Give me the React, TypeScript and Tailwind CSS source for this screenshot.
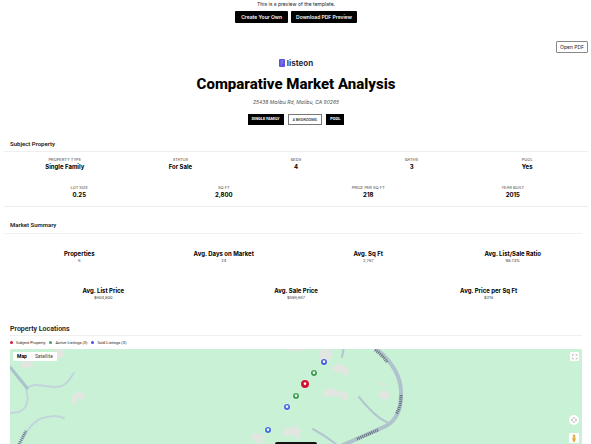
type Item = { label: string; value: string };

const subjectTop: Item[] = [
  { label: "Property Type", value: "Single Family" },
  { label: "Status", value: "For Sale" },
  { label: "Beds", value: "4" },
  { label: "Baths", value: "3" },
  { label: "Pool", value: "Yes" },
];
const subjectBottom: Item[] = [
  { label: "Lot Size", value: "0.25" },
  { label: "Sq Ft", value: "2,800" },
  { label: "Price per Sq Ft", value: "218" },
  { label: "Year Built", value: "2015" },
];
const marketTop: Item[] = [
  { label: "Properties", value: "6" },
  { label: "Avg. Days on Market", value: "24" },
  { label: "Avg. Sq Ft", value: "2,767" },
  { label: "Avg. List/Sale Ratio", value: "98.73%" },
];
const marketBottom: Item[] = [
  { label: "Avg. List Price", value: "$604,800" },
  { label: "Avg. Sale Price", value: "$596,667" },
  { label: "Avg. Price per Sq Ft", value: "$216" },
];
const legend = [
  { label: "Subject Property", dot: "bg-[#d6163a]" },
  { label: "Active Listings (3)", dot: "bg-[#4f9c62]" },
  { label: "Sold Listings (3)", dot: "bg-[#4b50e6]" },
];
const pins = [
  { x: 314, y: 13, r: 3, color: "#4a5bdc" },
  { x: 304, y: 24, r: 3, color: "#35a04c" },
  { x: 295, y: 35, r: 4, color: "#d2122e" },
  { x: 286, y: 47, r: 3, color: "#35a04c" },
  { x: 277, y: 58, r: 3, color: "#3f6be0" },
  { x: 258, y: 81, r: 3, color: "#3f6be0" },
];

function Facts({ items, className }: { items: Item[]; className: string }) {
  return (
    <dl className={`-mx-[3px] flex text-center ${className}`}>
      {items.map((i) => (
        <div key={i.label} className="flex-1 basis-0">
          <dt className="text-[4px] leading-[7px] uppercase text-[#444]">{i.label}</dt>
          <dd className="text-[6px] leading-2 font-bold">{i.value}</dd>
        </div>
      ))}
    </dl>
  );
}

function Stats({ items, className }: { items: Item[]; className: string }) {
  return (
    <dl className={`-mx-[3px] flex text-center ${className}`}>
      {items.map((i) => (
        <div key={i.label} className="flex-1 basis-0">
          <dt className="text-[6px] leading-2 font-bold">{i.label}</dt>
          <dd className="text-[4px] leading-[6px] text-[#333]">{i.value}</dd>
        </div>
      ))}
    </dl>
  );
}

function Logo() {
  return (
    <div className="mt-1.5 flex h-2 items-center justify-center gap-0.5">
      <svg viewBox="0 0 12 16" className="h-2 w-1.5" aria-hidden="true">
        <rect width="12" height="16" rx="2" fill="#5b50dd" />
        <path d="M3 4h6M3 8h6M3 12h3" stroke="#aaa5f5" strokeWidth="1.5" />
      </svg>
      <span className="text-[8px] leading-2 font-bold text-[#2c2d3c]">listeon</span>
    </div>
  );
}

function MapDrawing() {
  return (
    <svg
      viewBox="0 0 572 95"
      preserveAspectRatio="xMidYMin slice"
      className="absolute inset-0 h-full w-full"
      role="img"
      aria-label="Map of property locations"
    >
      <rect width="572" height="95" fill="#c8f1d6" />
      <g fill="#e1e6e1">
        <path d="M45 0h7l2 7-5 3-5-3zM11 14l5-3 6 2 1 5-11 1z" />
        <path d="M61 49l4-5 6-2 5 7-5 2-2-3-4 8-4-3z" />
        <path d="M310 1l11-1 1 9-5 5-8-4zM324 16l5-2 10 5-1 8-17-6zM314 41l5-2 19 5-1 8-11-5-14 1zM370 33l10 5-10-2zM368 44l6-3 6 3-2 7-9-2zM275 78l7 1 1-5 4 5 6 2-3 2-2 7-5-4-10 1zM240 87l5-3 10 2-2 8h-7zM276 0h22l-7 2h-10z" />
      </g>
      <g fill="none" strokeLinecap="round" strokeLinejoin="round">
        <g stroke="#c3d5dc" strokeWidth="2">
          <path d="M17 39C24 33 35 38 46 38S60 29 64 24" />
          <path d="M16 40C19 50 18 59 9 63L0 64" />
          <path d="M10 95C17 80 25 71 33 69S45 66 54 69" />
        </g>
        <path d="M0 18L17 39" stroke="#abc2cc" strokeWidth="3" />
        <path d="M334 -2l-2 10M349 48Q366 69 377 73M303 80Q314 86 326 95" stroke="#b2c6cf" strokeWidth="2" />
        <path d="M363 -3C381 11 392 27 391 46C391 63 385 72 376 77L331 97" stroke="#b0c2cb" strokeWidth="4" />
        <path d="M365 1Q372 6 377 13M391 46Q391 58 386 65M368 81L347 90" stroke="#5d6c76" strokeWidth="3" strokeDasharray="1 1" strokeLinecap="butt" />
        <path d="M9 95L16 82" stroke="#68778b" strokeWidth="3" strokeDasharray="1 1" strokeLinecap="butt" />
      </g>
      {pins.map((p) => (
        <g key={`${p.x}-${p.y}`} transform={`translate(${p.x} ${p.y})`}>
          <circle r={p.r + 0.6} fill="#f4fbf6" opacity=".6" />
          <circle r={p.r} fill={p.color} />
          <path d="M-1.200-1.500h2.400v1.800L0 1.300l-1.200-1z" fill="#fff" />
        </g>
      ))}
    </svg>
  );
}

export default function App() {
  const heading = "font-['Roboto','Liberation_Sans',sans-serif] text-[6px] leading-2.5 font-semibold text-[#222]";
  return (
    <div className="flex h-screen flex-col overflow-hidden bg-white pr-[9px] pl-2.5 font-['Inter','Liberation_Sans',sans-serif] text-black">
      <header className="text-center">
        <p className="text-[5px] leading-2 text-[#222]">This is a preview of the template.</p>
        <div className="mt-[3px] flex justify-center gap-[3px] text-[5px] leading-3 font-semibold text-white">
          <button className="h-3 rounded-[1px] bg-black px-1.5">Create Your Own</button>
          <button className="h-3 rounded-[1px] bg-black px-[5px]">Download PDF Preview</button>
        </div>
        <div className="-mr-1.5 mt-[18px] flex justify-end">
          <button className="h-3 rounded-[1px] border border-[#888] px-[3px] text-[5px] leading-2.5 text-[#222]">Open PDF</button>
        </div>
        <Logo />
        <h1 className="mt-[7px] font-['Roboto','Liberation_Sans',sans-serif] text-[15px] leading-5 font-extrabold">Comparative Market Analysis</h1>
        <p className="mt-1 text-[5px] leading-2 text-[#555] italic">25438 Malibu Rd, Malibu, CA 90265</p>
        <div className="mt-2 flex justify-center gap-1 font-['Roboto','Liberation_Sans',sans-serif] text-[4px] leading-2.5 font-bold uppercase">
          <span className="h-[11px] bg-black px-1 text-white">Single Family</span>
          <span className="h-[11px] border border-[#777] px-1 font-medium text-[#333]">4 Bedrooms</span>
          <span className="h-[11px] bg-black px-1 text-white">Pool</span>
        </div>
      </header>

      <section className="-mx-1.5 mt-3.5 border-b border-[#ececec] pb-[7px]">
        <h2 className={`${heading} border-b border-[#efefef] px-1.5 pb-0.5`}>Subject Property</h2>
        <div className="px-1.5">
          <Facts items={subjectTop} className="mt-1" />
          <Facts items={subjectBottom} className="mt-[13px]" />
        </div>
      </section>

      <section className="mt-[13px]">
        <h2 className={`${heading} -ml-1.5 border-b border-[#f2f2f2] pb-[3px] pl-1.5`}>Market Summary</h2>
        <Stats items={marketTop} className="mt-4" />
        <Stats items={marketBottom} className="mt-[23px]" />
      </section>

      <section className="mt-[22px] flex min-h-0 flex-1 flex-col">
        <h2 className="border-b border-[#f0f0f0] font-['Roboto','Liberation_Sans',sans-serif] text-[7px] leading-3 font-semibold text-[#222]">Property Locations</h2>
        <ul className="mt-[3px] flex gap-1 font-['Roboto','Liberation_Sans',sans-serif] text-[4px] leading-[7px] text-[#222]">
          {legend.map((l) => (
            <li key={l.label} className="flex items-center gap-[3px]">
              <span className={`size-[3px] rounded-full ${l.dot}`} />
              {l.label}
            </li>
          ))}
        </ul>
        <div className="relative mt-[3px] min-h-0 flex-1 overflow-hidden rounded-t-[2px] bg-[#c8f1d6]">
          <MapDrawing />
          <div className="absolute top-[3px] left-[3px] flex h-[9px] items-center gap-2 rounded-[1px] bg-white px-1 font-['Roboto','Liberation_Sans',sans-serif] text-[5px] leading-[9px] text-[#444]">
            <button className="font-bold text-black">Map</button>
            <button>Satellite</button>
          </div>
          <button aria-label="Full screen" className="absolute top-[3px] right-[3px] size-[9px] rounded-[1px] bg-white">
            <svg viewBox="0 0 9 9" className="size-[9px]" fill="none" stroke="#aaa">
              <path d="M2.500 4V2.500H4M5.500 2.500H7V4M7 5.500V7H5.500M4 7H2.500V5.500" strokeWidth=".7" />
            </svg>
          </button>
          <button aria-label="Map camera controls" className="absolute top-[66px] right-[3px] size-[10px] rounded-full bg-white">
            <svg viewBox="0 0 10 10" className="size-[10px]" fill="none" stroke="#777">
              <path d="M4 3.500L5 2.500l1 1M6.500 4l1 1-1 1M6 6.500l-1 1-1-1M3.500 6l-1-1 1-1" strokeWidth=".7" />
            </svg>
          </button>
          <button aria-label="Street view" className="absolute top-[84px] right-[3px] size-[10px] rounded-[1px] bg-white">
            <svg viewBox="0 0 10 10" className="size-[10px]" fill="#dfae48">
              <circle cx="5" cy="3" r="1.4" />
              <path d="M3.200 4.500h3.600L6.500 7l-.7 2H4.200l-.7-2z" />
            </svg>
          </button>
          <div className="absolute bottom-0 left-1/2 h-0.5 w-[42px] -translate-x-1/2 rounded-t-[2px] bg-[#111]" />
        </div>
      </section>
    </div>
  );
}
